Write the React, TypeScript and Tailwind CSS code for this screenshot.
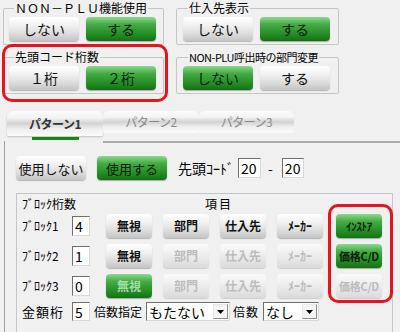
import React from 'react';

type Variant = 'gray' | 'green' | 'grayOff' | 'greenOff';

const variants: Record<Variant, string> = {
  gray: 'bg-[linear-gradient(to_bottom,#ffffff_0%,#f1f1f1_35%,#dcdcdc_70%,#c4c4c4_100%)] text-[#111] shadow-[0_1px_1px_rgba(0,0,0,0.25)]',
  green: 'bg-[linear-gradient(to_bottom,#8fd88f_0%,#46ad46_30%,#2a922a_65%,#137213_100%)] text-[#0a200a] shadow-[0_1px_1px_rgba(0,0,0,0.3)]',
  grayOff: 'bg-[linear-gradient(to_bottom,#fbfbfb_0%,#efefef_40%,#dadada_100%)] text-[#bcbcbc] shadow-[0_1px_1px_rgba(0,0,0,0.15)]',
  greenOff: 'bg-[linear-gradient(to_bottom,#8fd88f_0%,#46ad46_30%,#2a922a_65%,#137213_100%)] text-[#a6dca6] shadow-[0_1px_1px_rgba(0,0,0,0.3)]',
};

const Btn: React.FC<{ label: string; v?: Variant; w?: string; text?: string }> = ({ label, v = 'gray', w = 'w-[70px]', text = 'text-[14px]' }) => (
  <div className={`${w} h-[24px] shrink-0 rounded-[4px] flex items-center justify-center leading-none ${text} ${variants[v]}`}>
    {label}
  </div>
);

interface GroupProps {
  title: string;
  titleClass?: string;
  labels: [string, string];
  left: Variant;
  right: Variant;
  w: string;
  pad: string;
}

// etched group box, title sits on the top border
const Group: React.FC<GroupProps> = ({ title, titleClass = 'text-[12px]', labels, left, right, w, pad }) => (
  <div className={`${w} border border-[#c6c6c6] rounded-[2px] ${pad} pb-[3px]`}>
    <div className={`-mt-[8px] ml-[5px] px-[1px] w-fit h-[14px] bg-[#f0f0f0] leading-[14px] whitespace-nowrap ${titleClass}`}>{title}</div>
    <div className="mt-[2px] flex gap-[7px]">
      <Btn label={labels[0]} v={left} />
      <Btn label={labels[1]} v={right} />
    </div>
  </div>
);

const TextBox: React.FC<{ value: string; w: string; h?: string }> = ({ value, w, h = 'h-[20px]' }) => (
  <div className={`${w} ${h} shrink-0 bg-white border border-[#6f6f6f] border-r-[#d8d8d8] border-b-[#d8d8d8] flex items-center pl-[2px] text-[14px] leading-none`}>
    {value}
  </div>
);

const Select: React.FC<{ value: string; w: string }> = ({ value, w }) => (
  <div className={`${w} h-[19px] shrink-0 bg-white border border-[#6f6f6f] border-r-[#d8d8d8] border-b-[#d8d8d8] flex items-center justify-between pl-[2px] pr-[1px]`}>
    <span className="text-[14px] leading-none">{value}</span>
    <div className="w-[15px] h-[15px] bg-[#f4f4f4] border border-[#e8e8e8] border-r-[#8a8a8a] border-b-[#8a8a8a] flex items-center justify-center">
      <svg width="7" height="4" viewBox="0 0 7 4"><path d="M0 0h7L3.5 4z" fill="#000" /></svg>
    </div>
  </div>
);

const Tab: React.FC<{ label: string; active?: boolean; w: string }> = ({ label, active, w }) => (
  <div
    className={`${w} ${active ? 'h-[25px] shadow-[0_1px_2px_rgba(0,0,0,0.2)] text-[#333] font-bold' : 'h-[22px] text-[#8a8a8a]'} rounded-t-[6px] rounded-b-[2px] flex items-center justify-center text-[12px] tracking-[-0.5px] bg-[linear-gradient(to_bottom,#fcfcfc_0%,#f3f3f3_28%,#d2d2d2_50%,#efefef_72%,#fbfbfb_100%)]`}
  >
    {label}
  </div>
);

const blockRows: { label: string; value: string; btns: [string, Variant][] }[] = [
  { label: 'ﾌﾞﾛｯｸ1', value: '4', btns: [['無視', 'gray'], ['部門', 'gray'], ['仕入先', 'gray'], ['ﾒｰｶｰ', 'gray'], ['ｲﾝｽﾄｱ', 'green']] },
  { label: 'ﾌﾞﾛｯｸ2', value: '1', btns: [['無視', 'gray'], ['部門', 'grayOff'], ['仕入先', 'grayOff'], ['ﾒｰｶｰ', 'grayOff'], ['価格C/D', 'green']] },
  { label: 'ﾌﾞﾛｯｸ3', value: '0', btns: [['無視', 'greenOff'], ['部門', 'grayOff'], ['仕入先', 'grayOff'], ['ﾒｰｶｰ', 'grayOff'], ['価格C/D', 'grayOff']] },
];

export default function App() {
  return (
    <div className="relative w-[400px] h-[332px] overflow-hidden bg-[#f0f0f0] pt-[8px] text-black font-['Noto_Sans_CJK_JP','Noto_Sans',sans-serif]">
      {/* top option groups */}
      <div className="flex pl-[3px] gap-[12px]">
        <div className="flex flex-col gap-[12px]">
          <Group title="ＮＯＮ－ＰＬＵ機能使用" labels={['しない', 'する']} left="gray" right="green" w="w-[161px]" pad="pl-[5px] pr-[6px]" />
          <Group title="先頭コード桁数" labels={['１桁', '２桁']} left="gray" right="green" w="w-[161px]" pad="pl-[5px] pr-[6px]" />
        </div>
        <div className="flex flex-col gap-[12px]">
          <Group title="仕入先表示" labels={['しない', 'する']} left="gray" right="green" w="w-[163px]" pad="pl-[6px] pr-[6px]" />
          <Group title="NON-PLU呼出時の部門変更" titleClass="text-[11px] tracking-[-0.5px]" labels={['しない', 'する']} left="green" right="gray" w="w-[163px]" pad="pl-[6px] pr-[6px]" />
        </div>
      </div>

      {/* tabs */}
      <div className="mt-[17px] flex items-start pl-[7px]">
        <Tab label="パターン1" active w="w-[96px]" />
        <Tab label="パターン2" w="w-[96px]" />
        <Tab label="パターン3" w="w-[95px]" />
      </div>
      <div className="h-[5px] pl-[32px] pt-[1px]">
        <div className="w-[47px] h-[3px] bg-[#178a17]" />
      </div>

      {/* panel */}
      <div className="ml-[4px] border-l border-[#9c9c9c] h-[200px]">
        <div className="flex">
          <div className="w-[98px]" />
          <div className="flex-1 h-[2px] bg-[#a9a9a9]" />
        </div>
        <div className="flex items-center pl-[11px] pt-[13px]">
          <Btn label="使用しない" text="text-[13px]" />
          <div className="ml-[11px]"><Btn label="使用する" v="green" text="text-[13px]" /></div>
          <span className="ml-[11px] text-[14px] leading-none">先頭ｺｰﾄﾞ</span>
          <div className="ml-[4px]"><TextBox value="20" w="w-[23px]" /></div>
          <span className="ml-[7px] text-[14px] leading-none">-</span>
          <div className="ml-[9px]"><TextBox value="20" w="w-[22px]" /></div>
        </div>

        <div className="ml-[11px] mt-[13px] w-[377px] h-[150px] border border-[#c6c6c6] pl-[5px] pt-[2px]">
          <div className="flex text-[12px] leading-[16px]">
            <span className="w-[183px]">ﾌﾞﾛｯｸ桁数</span>
            <span className="tracking-[2px]">項目</span>
          </div>
          <div className="mt-[2px] flex flex-col gap-[6px]">
            {blockRows.map((r) => (
              <div key={r.label} className="flex items-center">
                <span className="w-[50px] text-[12px] leading-none">{r.label}</span>
                <TextBox value={r.value} w="w-[18px]" />
                <div className="ml-[16px] flex gap-[11px]">
                  {r.btns.slice(0, 4).map(([b, v]) => (
                    <Btn key={b} label={b} v={v} w="w-[46px]" text="text-[12px] font-bold" />
                  ))}
                </div>
                <div className="ml-[13px]">
                  <Btn label={r.btns[4][0]} v={r.btns[4][1]} w="w-[46px]" text="text-[11px] font-bold tracking-[-0.3px]" />
                </div>
              </div>
            ))}
          </div>
          <div className="mt-[4px] flex items-center">
            <span className="w-[50px] text-[13px] leading-none tracking-[1px]">金額桁</span>
            <TextBox value="5" w="w-[18px]" h="h-[19px]" />
            <span className="ml-[4px] text-[12px] leading-none">倍数指定</span>
            <div className="ml-[4px]"><Select value="もたない" w="w-[84px]" /></div>
            <span className="ml-[3px] text-[12px] leading-none tracking-[1px]">倍数</span>
            <div className="ml-[4px]"><Select value="なし" w="w-[56px]" /></div>
          </div>
        </div>
      </div>

      {/* red highlight callouts */}
      <div className="absolute left-[2px] top-[44px] w-[166px] h-[58px] border-[3px] border-[#e8141c] rounded-[10px] pointer-events-none" />
      <div className="absolute left-[328px] top-[204px] w-[65px] h-[99px] border-[3px] border-[#e8141c] rounded-[10px] pointer-events-none" />
    </div>
  );
}
